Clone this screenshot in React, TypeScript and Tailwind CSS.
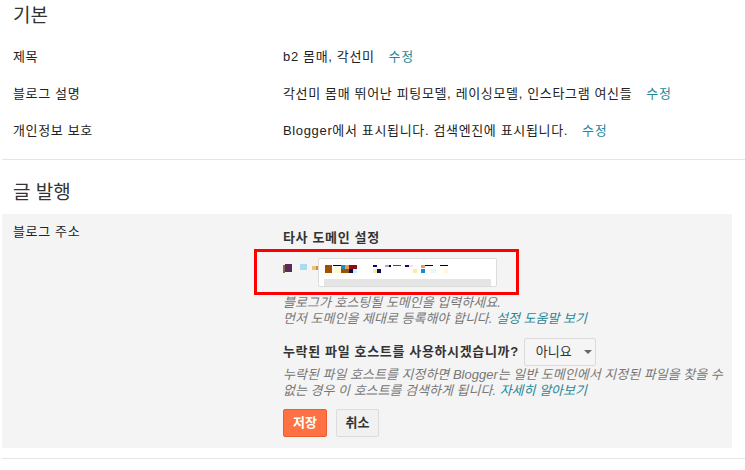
export default function App() {
  return (
    <div className="w-[745px] h-[470px] overflow-hidden bg-white text-[13px] tracking-[0.65px] text-[#222] font-['Liberation_Sans','Noto_Sans_CJK_KR',sans-serif]">
      {/* 기본 */}
      <h2 className="h-[32px] pl-[13px] flex items-center text-[19px] tracking-normal font-normal text-[#333]">기본</h2>
      <div className="mt-[6px]">
        <Row label="제목" value="b2 몸매, 각선미" />
        <Row label="블로그 설명" value="각선미 몸매 뛰어난 피팅모델, 레이싱모델, 인스타그램 여신들" />
        <Row label="개인정보 보호" value="Blogger에서 표시됩니다. 검색엔진에 표시됩니다." />
      </div>
      <div className="mt-[10px] ml-[2px] border-t border-[#e5e5e5]" />

      {/* 글 발행 */}
      <h2 className="h-[54px] pl-[13px] pt-[21px] text-[19px] leading-[24px] tracking-normal font-normal text-[#333]">글 발행</h2>
      <div className="ml-[2px] w-[730px] h-[234px] bg-[#f4f4f4] flex">
        <div className="w-[281px] pl-[11px] pt-[10px] leading-[16px]">블로그 주소</div>
        <div className="flex-1 pt-[16px]">
          <div className="font-bold leading-[16px] text-[#333]">타사 도메인 설정</div>
          <div className="mt-[3px] ml-[-29px] w-[265px] h-[46px] border-[3px] border-[#ff0000] flex items-center pl-[26px]">
            <svg width="35" height="29" viewBox="0 0 35 29">
              <rect x="0" y="7" width="2" height="8" fill="#8a6a3a" />
              <rect x="2" y="6" width="7" height="8" fill="#5a2a5a" />
              <rect x="17" y="6" width="7" height="6" fill="#a8dcf5" />
              <rect x="29" y="8" width="4" height="4" fill="#f0c080" />
              <rect x="33" y="8" width="2" height="4" fill="#d8902a" />
            </svg>
            <div className="relative w-[179px] h-[29px] bg-white border border-[#dcdcdc] rounded-[2px]">
              <svg className="absolute left-0 top-0" width="179" height="29" viewBox="0 0 179 29">
                <rect x="6" y="6" width="7" height="8" fill="#a05000" />
                <rect x="14" y="6" width="8" height="1" fill="#000" />
                <rect x="14" y="8" width="8" height="6" fill="#fffbd0" />
                <rect x="22" y="6" width="4" height="4" fill="#1a8ad0" />
                <rect x="26" y="6" width="4" height="4" fill="#e0a050" />
                <rect x="30" y="6" width="8" height="4" fill="#8a1010" />
                <rect x="22" y="10" width="8" height="4" fill="#a05000" />
                <rect x="30" y="10" width="4" height="4" fill="#0a0a60" />
                <rect x="34" y="10" width="4" height="4" fill="#c8f4f4" />
                <rect x="54" y="6" width="4" height="2" fill="#0a0a60" />
                <rect x="54" y="10" width="5" height="4" fill="#fde8b0" />
                <rect x="58" y="10" width="4" height="4" fill="#0a0a60" />
                <rect x="66" y="6" width="4" height="2" fill="#99aadd" />
                <rect x="70" y="6" width="2" height="2" fill="#000" />
                <rect x="74" y="6" width="8" height="1" fill="#1a5aa0" />
                <rect x="86" y="6" width="4" height="2" fill="#0a0a60" />
                <rect x="90" y="6" width="4" height="2" fill="#fdd" />
                <rect x="94" y="10" width="4" height="4" fill="#fde8b0" />
                <rect x="102" y="6" width="4" height="3" fill="#e0a050" />
                <rect x="102" y="10" width="4" height="4" fill="#1a8ad0" />
                <rect x="106" y="6" width="8" height="1" fill="#000" />
                <rect x="112" y="10" width="5" height="4" fill="#e0fafa" />
                <rect x="121" y="6" width="8" height="1" fill="#000" />
                <rect x="125" y="10" width="4" height="4" fill="#fffbd0" />
                <rect x="5" y="20" width="167" height="7" fill="#e5e5e5" />
              </svg>
            </div>
          </div>
          <p className="italic leading-[16px] tracking-normal text-[#777] whitespace-nowrap">
            블로그가 호스팅될 도메인을 입력하세요.
            <br />
            먼저 도메인을 제대로 등록해야 합니다. <span className="text-[#1f8797]">설정 도움말 보기</span>
          </p>
          <div className="mt-[11px] h-[28px] flex items-center">
            <span className="font-bold text-[#333] whitespace-nowrap">누락된 파일 호스트를 사용하시겠습니까?</span>
            <div className="ml-[5px] w-[72px] h-[28px] flex items-center pl-[11px] bg-[#f5f5f5] border border-[#dcdcdc] rounded-[2px] text-[#333] tracking-normal">
              <span>아니요</span>
              <svg className="ml-[12px]" width="8" height="4" viewBox="0 0 8 4">
                <path d="M0 0h8L4 4z" fill="#666" />
              </svg>
            </div>
          </div>
          <p className="mt-[1px] italic leading-[16px] tracking-normal text-[#777] whitespace-nowrap">
            누락된 파일 호스트를 지정하면 Blogger는 일반 도메인에서 지정된 파일을 찾을 수
            <br />
            없는 경우 이 호스트를 검색하게 됩니다. <span className="text-[#1f8797]">자세히 알아보기</span>
          </p>
          <div className="mt-[10px] flex gap-[9px] tracking-normal">
            <button className="w-[44px] h-[28px] rounded-[2px] bg-[#fe7144] border border-[#f05a2a] text-white font-bold">저장</button>
            <button className="w-[43px] h-[28px] rounded-[2px] bg-[#f1f1f1] border border-[#dcdcdc] text-[#333] font-bold">취소</button>
          </div>
        </div>
      </div>
      <div className="mt-[10px] ml-[2px] border-t border-[#e5e5e5]" />
    </div>
  );
}

function Row({ label, value }: { label: string; value: string }) {
  return (
    <div className="h-[37px] flex items-center">
      <div className="w-[283px] pl-[13px]">{label}</div>
      <div className="whitespace-nowrap">{value}</div>
      <a className="ml-[14px] text-[#1f8797]">수정</a>
    </div>
  );
}
